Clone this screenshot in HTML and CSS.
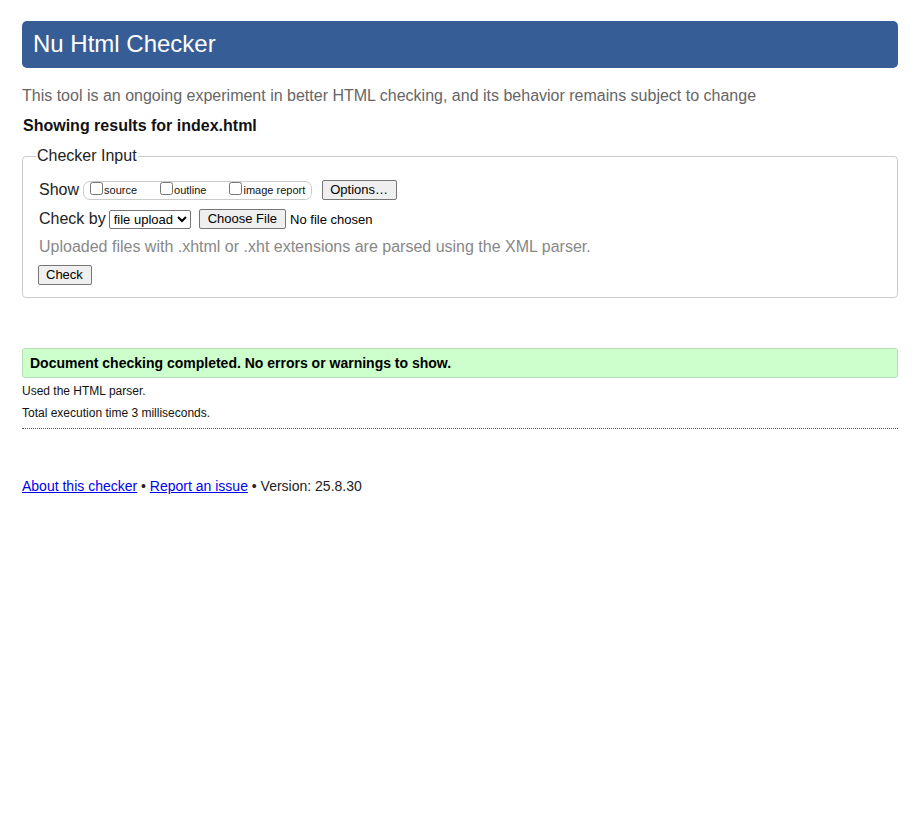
FILE: index.html
```html
<!DOCTYPE html>
<html lang="en">
<head>
<meta charset="utf-8">
<title>Nu Html Checker</title>
<link rel="stylesheet" href="styles.css">
</head>
<body>
<h1 class="title">Nu Html Checker</h1>
<p class="intro">This tool is an ongoing experiment in better HTML checking, and its behavior remains subject to change</p>
<p class="showing">Showing results for index.html</p>
<form class="form">
  <fieldset class="fieldset">
    <legend class="legend">Checker Input</legend>
    <div class="row">
      <span class="label">Show</span>
      <span class="extras">
        <label class="opt"><input type="checkbox" class="cb">source</label>
        <label class="opt"><input type="checkbox" class="cb">outline</label>
        <label class="opt"><input type="checkbox" class="cb">image report</label>
      </span>
      <button type="button" class="btn opts">Options…</button>
    </div>
    <div class="row row2">
      <span class="label">Check by</span>
      <select class="sel"><option>file upload</option></select>
      <span class="file"><button type="button" class="btn choose">Choose File</button><span class="nofile">No file chosen</span></span>
    </div>
    <p class="note">Uploaded files with .xhtml or .xht extensions are parsed using the XML parser.</p>
    <button type="button" class="btn check">Check</button>
  </fieldset>
</form>
<p class="success">Document checking completed. No errors or warnings to show.</p>
<p class="detail">Used the HTML parser.</p>
<p class="detail detail2">Total execution time 3 milliseconds.</p>
<hr class="rule">
<p class="footer"><a href="#">About this checker</a> • <a href="#">Report an issue</a> • Version: 25.8.30</p>
</body>
</html>
```
FILE: styles.css
```css
html { background: #fff; }
body {
  margin: 0;
  padding: 21px 18px 0 22px;
  font-family: "Liberation Sans", Arial, sans-serif;
  color: #222;
}
.title {
  margin: 0;
  height: 47px;
  box-sizing: border-box;
  padding: 8px 11px 0;
  background: #365d95;
  color: #fff;
  font-weight: normal;
  font-size: 24px;
  line-height: 30px;
  border-radius: 5px;
}
.intro {
  margin: 18px 0 0;
  font-size: 16px;
  line-height: 19px;
  color: #666;
}
.showing {
  margin: 11px 0 0 1px;
  font-size: 16px;
  line-height: 19px;
  font-weight: bold;
  color: #111;
}
.form { margin: 12px 0 0; }
.fieldset {
  margin: 0;
  padding: 0 0 12px 16px;
  border: 1px solid #ccc;
  border-radius: 4px;
  min-width: 0;
}
.legend {
  padding: 0 1px;
  margin-left: -3px;
  font-size: 16px;
  line-height: 18px;
  color: #222;
}
.row {
  display: flex;
  align-items: center;
  margin-top: 15px;
  height: 20px;
}
.row2 { margin-top: 9px; }
.label {
  font-size: 16px;
  color: #222;
  margin-right: 4px;
}
.row2 .label { margin-right: 3px; }
.extras {
  display: inline-flex;
  align-items: center;
  height: 17px;
  border: 1px solid #ccc;
  border-radius: 7px;
  padding: 0 6px 0 3px;
  margin-right: 10px;
  font-size: 11px;
  color: #111;
}
.opt {
  display: inline-flex;
  align-items: center;
  margin-right: 20px;
}
.opt:last-child { margin-right: 0; }
.cb {
  margin: 0 1px 0 3px;
  width: 13px;
  height: 13px;
  position: relative;
  top: -2px;
}
.btn {
  font-family: "Liberation Sans", Arial, sans-serif;
  font-size: 13px;
  color: #000;
  background: #efefef;
  border: 1px solid #767676;
  border-radius: 2px;
  padding: 1px 8px;
  height: 20px;
  line-height: 16px;
}
.opts { padding: 1px 8px 1px 7px; }
.sel {
  font-family: "Liberation Sans", Arial, sans-serif;
  font-size: 13px;
  height: 19px;
  width: 82px;
  border: 1px solid #767676;
  border-radius: 2px;
  margin-right: 8px;
  padding: 0;
  background: #fff;
  color: #000;
}
.file { display: inline-flex; align-items: center; font-size: 13px; color: #000; }
.choose { margin-right: 4px; }
.note {
  margin: 8px 0 0;
  font-size: 16px;
  line-height: 19px;
  color: #888;
}
.check { margin-top: 9px; padding: 1px 8px 1px 7px; margin-left: -1px; }
.success {
  margin: 50px 0 0;
  height: 30px;
  box-sizing: border-box;
  padding: 6px 7px;
  background: #ccffcc;
  border: 1px solid #b5deb5;
  border-radius: 3px;
  font-size: 14px;
  line-height: 16px;
  font-weight: bold;
  color: #000;
}
.detail {
  margin: 6px 0 0;
  font-size: 12px;
  line-height: 15px;
  color: #111;
}
.detail2 { margin-top: 7px; }
.rule {
  margin: 7px 0 0;
  border: 0;
  border-top: 1px dotted #555;
  height: 0;
}
.footer {
  margin: 49px 0 0;
  font-size: 14px;
  line-height: 17px;
  color: #222;
}
.footer a { color: #0000ee; }
```
